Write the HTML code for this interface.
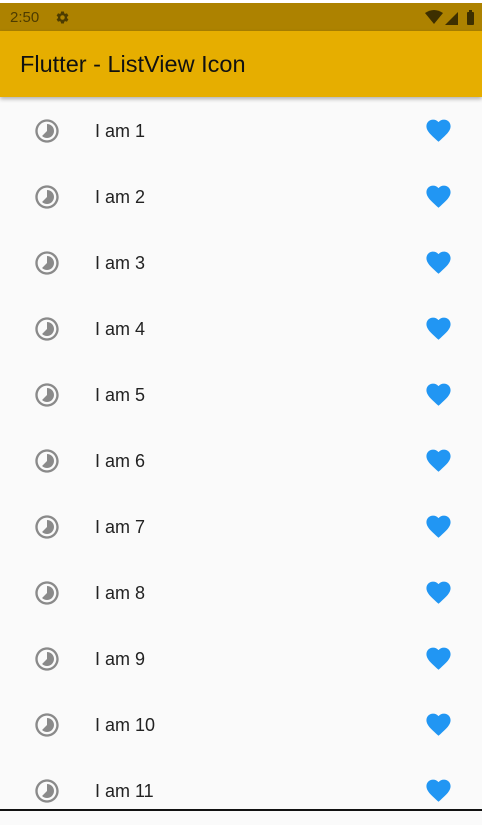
<!DOCTYPE html>
<html><head><style>
body{margin:0;width:482px;height:811px;overflow:hidden;background:#fafafa;font-family:"Liberation Sans",sans-serif;position:relative}
.top{position:absolute;left:0;top:0;width:482px;height:3px;background:#fff}
.sb{position:absolute;left:0;top:3px;width:482px;height:28px;background:#ad8200}
.sb .t{position:absolute;left:10px;top:6px;font-size:15px;color:#4d3c00}
.ab{position:absolute;left:0;top:31px;width:482px;height:66px;background:#e6ae00;box-shadow:0 2px 4px rgba(0,0,0,.3);z-index:2}
.ab .t{position:absolute;left:20px;top:20px;font-size:23.5px;color:#111}
.row{position:absolute;left:0;width:482px;height:66px}
.row .ic{position:absolute;left:33px;top:18px}
.row .tx{position:absolute;left:95px;top:22px;font-size:18px;color:#222}
.row .hr{position:absolute;left:424px;top:17px}
.bot{position:absolute;left:0;top:809px;width:482px;height:2px;background:#111}
</style></head><body>
<div class="top"></div>
<div class="sb"><span class="t">2:50</span>
<svg style="position:absolute;left:55px;top:7px" width="15" height="15" viewBox="0 0 24 24"><path fill="#4d3c00" d="M19.14 12.94c.04-.3.06-.61.06-.94 0-.32-.02-.64-.07-.94l2.03-1.58a.49.49 0 0 0 .12-.61l-1.920-3.32a.49.49 0 0 0-.59-.22l-2.39.96c-.5-.38-1.030-.7-1.62-.94l-.36-2.54a.48.48 0 0 0-.48-.41h-3.84c-.24 0-.43.17-.47.41l-.36 2.54c-.59.24-1.13.57-1.62.94l-2.39-.96a.48.48 0 0 0-.59.22L2.74 8.87c-.12.21-.08.47.12.61l2.03 1.58c-.05.3-.09.63-.09.94s.02.64.07.94l-2.03 1.58a.49.49 0 0 0-.12.61l1.92 3.32c.12.22.37.29.59.22l2.39-.96c.5.38 1.03.7 1.62.94l.36 2.54c.05.24.24.41.48.41h3.84c.24 0 .44-.17.47-.41l.36-2.54c.59-.24 1.13-.56 1.62-.94l2.39.96c.22.08.47 0 .59-.22l1.92-3.32c.12-.22.07-.47-.12-.61l-2.01-1.58zM12 15.6A3.6 3.6 0 1 1 12 8.4a3.6 3.6 0 0 1 0 7.2z"/></svg>
<svg style="position:absolute;left:424px;top:6px" width="56" height="18" viewBox="0 0 56 18">
<path fill="#3d2f00" d="M1 4 Q10 -2 19 4 L10 15 Z"/>
<path fill="#3d2f00" d="M34 3 L34 16 L21 16 Z"/>
<rect x="43" y="3" width="7" height="13" rx="1" fill="#3d2f00"/><rect x="45" y="1" width="3" height="2" fill="#3d2f00"/>
</svg></div>
<div class="ab"><span class="t">Flutter - ListView Icon</span></div>
<div id="list"></div>
<script>
var h='';
for(var i=1;i<=11;i++){var y=99+(i-1)*66;
h+='<div class="row" style="top:'+y+'px"><svg class="ic" width="28" height="28" viewBox="0 0 24 24"><path fill="#8a8a8a" d="M16.24 7.76C15.07 6.59 13.54 6 12 6v6l-4.24 4.24c2.34 2.34 6.14 2.34 8.49 0 2.34-2.34 2.34-6.14-.01-8.480zM12 2C6.48 2 2 6.48 2 12s4.48 10 10 10 10-4.48 10-10S17.52 2 12 2zm0 18c-4.42 0-8-3.58-8-8s3.58-8 8-8 8 3.58 8 8-3.58 8-8 8z"/></svg><span class="tx">I am '+i+'</span><svg class="hr" width="29" height="29" viewBox="0 0 24 24"><path fill="#2196f3" d="M12 21.35l-1.45-1.32C5.4 15.36 2 12.28 2 8.5 2 5.42 4.42 3 7.5 3c1.74 0 3.41.81 4.5 2.09C13.09 3.81 14.76 3 16.5 3 19.58 3 22 5.42 22 8.5c0 3.78-3.4 6.86-8.55 11.54L12 21.35z"/></svg></div>';}
document.getElementById('list').innerHTML=h;
</script>
<div class="bot"></div>
</body></html>
